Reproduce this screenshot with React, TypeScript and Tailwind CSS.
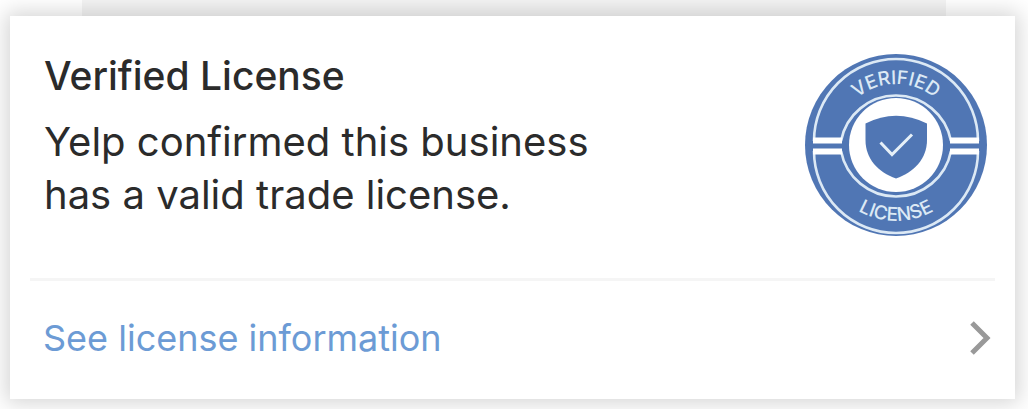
const Badge = () => (
  <svg
    viewBox="-92 -92 184 184"
    className="size-[184px] shrink-0"
    role="img"
    aria-label="Verified license"
  >
    <defs>
      <path id="top-arc" d="M-61 0A61 61 0 0 1 61 0" />
      <path id="bottom-arc" d="M-76 0A76 76 0 0 0 76 0" />
    </defs>
    <circle r="91" fill="#5076b4" />
    <g fill="none" stroke="#dce9f5" strokeWidth="2.6">
      <path d="M-82-4A82 82 0 0 1 82-4M-82 6A82 82 0 0 0 82 6" />
      <path d="M-55-4A56 56 0 0 1 55-4M-55 6A56 56 0 0 0 55 6" />
    </g>
    <path
      d="M-83-7.5h29v6h-29zM54-7.5h29v6H54zM-83 3.5h29v6h-29zM54 3.5h29v6H54z"
      fill="#fff"
    />
    <circle r="47" fill="#fff" />
    <path
      d="M-30.5-21.5Q0-37 31-21.5V-5C31 14 18 27 0 33.5C-18 27-30.5 14-30.5-5Z"
      fill="#5076b4"
    />
    <path d="M-15.5-2.5L-4 9.5L16-10.5" fill="none" stroke="#e6f0f8" strokeWidth="3" />
    <g
      fill="#dce9f5"
      textAnchor="middle"
      className="font-[Inter,sans-serif] text-[19px] font-medium"
    >
      <text>
        <textPath href="#top-arc" startOffset="50%">
          VERIFIED
        </textPath>
      </text>
      <text>
        <textPath href="#bottom-arc" startOffset="50%">
          LICENSE
        </textPath>
      </text>
    </g>
  </svg>
);

const App = () => {
  return (
    <main className="bg-white pb-[11px] font-[Inter,sans-serif]">
      <div className="mx-[82px] h-4 bg-[#f4f4f4]" />
      <section className="relative mr-[13px] ml-[10px] bg-white px-5 shadow-[0_0_20px_4px_rgba(0,0,0,0.17)]">
        <div className="flex items-start justify-between border-b-3 border-[#f5f5f5] pt-[37px] pr-[7px] pb-[41px] pl-[14px]">
          <div>
            <h1 className="text-[39px] leading-[46px] font-medium text-[#2b2b2b]">
              Verified License
            </h1>
            <p className="mt-4 text-[40px] leading-[53px] text-[#2b2b2b]">
              Yelp confirmed this business
              <br />
              has a valid trade license.
            </p>
          </div>
          <Badge />
        </div>
        <a
          href="#license"
          className="flex items-center justify-between pt-[33px] pr-[4px] pb-[37px] pl-[13px] text-[36px] leading-[48px] text-[#6c9bd5]"
        >
          See license information
          <svg
            viewBox="0 0 22 34"
            className="h-[34px] w-[22px]"
            fill="none"
            stroke="#999"
            strokeWidth="5"
            aria-hidden="true"
          >
            <path d="M3 2L18 17L3 32" />
          </svg>
        </a>
      </section>
    </main>
  );
};

export default App;
